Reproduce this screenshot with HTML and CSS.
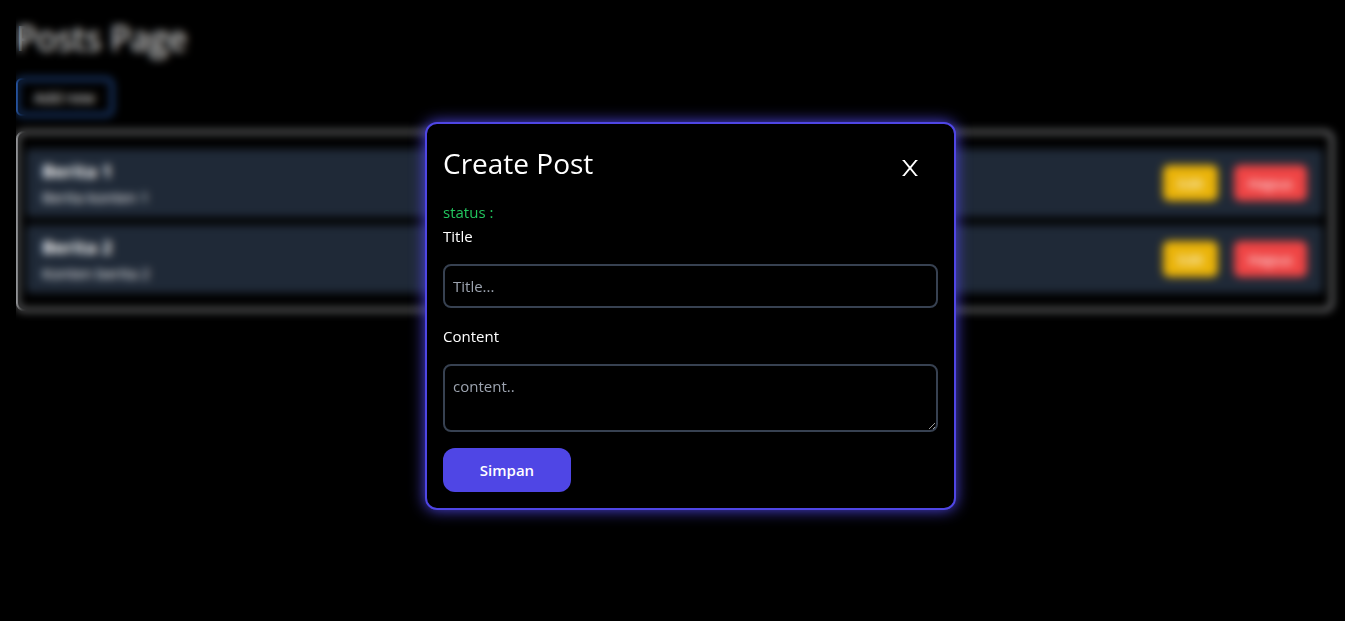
FILE: index.html
```html
<!DOCTYPE html>
<html lang="id">
<head>
<meta charset="utf-8">
<meta name="viewport" content="width=device-width, initial-scale=1">
<title>Posts Page</title>
<link rel="stylesheet" href="styles.css">
</head>
<body>
<main class="page">
  <h1 class="page-title">Posts Page</h1>
  <button class="add-button" type="button">Add new</button>
  <ul class="posts">
    <li class="post">
      <div class="post-text">
        <h2 class="post-title">Berita 1</h2>
        <p class="post-content">Berita konten 1</p>
      </div>
      <div class="post-actions">
        <button class="action edit" type="button">Edit</button>
        <button class="action delete" type="button">Hapus</button>
      </div>
    </li>
    <li class="post">
      <div class="post-text">
        <h2 class="post-title">Berita 2</h2>
        <p class="post-content">Konten berita 2</p>
      </div>
      <div class="post-actions">
        <button class="action edit" type="button">Edit</button>
        <button class="action delete" type="button">Hapus</button>
      </div>
    </li>
  </ul>
</main>
<div class="overlay">
  <section class="modal" role="dialog" aria-modal="true" aria-labelledby="modal-title">
    <header class="modal-header">
      <h2 class="modal-title" id="modal-title">Create Post</h2>
      <button class="close" type="button" aria-label="Close">
        <svg width="16" height="16" viewBox="0 0 16 16" fill="none" stroke="currentColor" aria-hidden="true">
          <path d="M1.8 .5 14.2 15.5M14.2 .5 1.8 15.5" stroke-width="1.9"/>
          <path d="M.5 .5H3M13 .5h2.5M.5 15.5H3M13 15.5h2.5" stroke-width="1"/>
        </svg>
      </button>
    </header>
    <form class="form">
      <p class="status">status :</p>
      <label class="label" for="title">Title</label>
      <input class="field" id="title" type="text" placeholder="Title...">
      <label class="label" for="content">Content</label>
      <textarea class="field area" id="content" rows="2" placeholder="content.."></textarea>
      <button class="save" type="submit">Simpan</button>
    </form>
  </section>
</div>
</body>
</html>
```
FILE: styles.css
```css
* {
  box-sizing: border-box;
  margin: 0;
  padding: 0;
}

body {
  min-height: 100vh;
  overflow: hidden;
  background: #000;
  color: #fff;
  font-family: "Segoe UI", "Open Sans", "Noto Sans", sans-serif;
  font-size: 15px;
  line-height: 24px;
}

button,
input,
textarea {
  font: inherit;
  color: inherit;
}

.page {
  padding: 18px 12px 16px 16px;
}

.page-title {
  margin-bottom: 20px;
  font-size: 34px;
  font-weight: 400;
  line-height: 40px;
}

.add-button {
  display: block;
  height: 38px;
  margin-bottom: 15px;
  padding: 0 16px;
  border: 2px solid #3b82f6;
  border-radius: 6px;
  background: transparent;
  font-weight: 500;
}

.posts {
  display: grid;
  gap: 8px;
  padding: 16px 8px;
  border: 2px solid #e5e7eb;
  border-radius: 8px;
  list-style: none;
}

.post {
  display: flex;
  align-items: center;
  justify-content: space-between;
  padding: 8px 16px;
  border-radius: 4px;
  background: #1f2937;
}

.post-title {
  font-size: 18px;
  font-weight: 700;
  line-height: 28px;
}

.post-content {
  font-weight: 500;
}

.post-actions {
  display: flex;
  gap: 16px;
}

.action {
  padding: 6px 14px;
  border: 0;
  border-radius: 6px;
}

.edit {
  background: #eab308;
}

.delete {
  background: #ef4444;
}

.overlay {
  position: fixed;
  inset: 0 -20px -11px 16px;
  display: flex;
  align-items: center;
  justify-content: center;
  backdrop-filter: blur(4px);
}

.modal {
  width: 531px;
  max-width: 100%;
  padding: 16px;
  border: 2px solid #4f46e5;
  border-radius: 12px;
  background: #000;
  box-shadow: 0 0 15px #4f46e5;
}

.modal-header {
  display: flex;
  align-items: center;
  justify-content: space-between;
  height: 56px;
  margin-bottom: 4px;
  padding-right: 20px;
}

.modal-title {
  height: 56px;
  font-size: 28px;
  font-weight: 400;
  line-height: 46px;
}

.close {
  display: flex;
  border: 0;
  background: transparent;
}

.form {
  display: flex;
  flex-direction: column;
  align-items: flex-start;
}

.status {
  color: #22c55e;
}

.label {
  margin-bottom: 16px;
}

.field {
  width: 100%;
  height: 44px;
  margin-bottom: 16px;
  padding: 8px;
  border: 2px solid #374151;
  border-radius: 8px;
  background: #000;
}

.field::placeholder {
  color: #9ca3af;
  opacity: 1;
}

.area {
  height: 68px;
  resize: vertical;
}

.save {
  width: 128px;
  height: 44px;
  border: 0;
  border-radius: 12px;
  background: #4f46e5;
  font-weight: 600;
}
```
